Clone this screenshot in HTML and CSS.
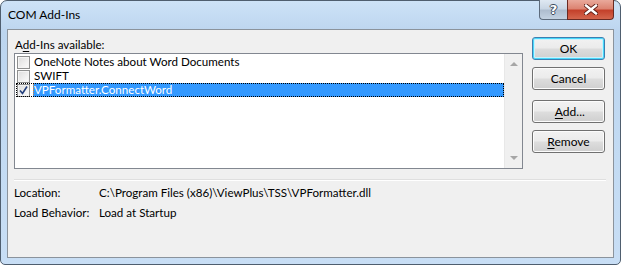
FILE: index.html
```html
<!DOCTYPE html>
<html lang="en">
<head>
  <meta charset="UTF-8" />
  <title>COM Add-Ins</title>
  <link rel="stylesheet" href="styles.css">
</head>
<body>
  <div class="window">
    <div class="titlebar">
      <span class="title">COM Add-Ins</span>
      <div class="caption-buttons">
        <div class="cap help">?</div>
        <div class="cap close">
          <svg width="14" height="11" viewBox="0 0 14 11">
            <path d="M2 1.5 L12 9.5 M12 1.5 L2 9.5" stroke="#5a1a12" stroke-width="4.2" stroke-linecap="square" fill="none"/>
            <path d="M2 1.5 L12 9.5 M12 1.5 L2 9.5" stroke="#fff" stroke-width="2.4" stroke-linecap="square" fill="none"/>
          </svg>
        </div>
      </div>
    </div>

    <div class="panel">
      <div class="top">
        <div class="left">
          <div class="label">A<u>d</u>d-Ins available:</div>
          <div class="listbox">
            <div class="items">
              <div class="item">
                <span class="check"></span>
                <span class="text">OneNote Notes about Word Documents</span>
              </div>
              <div class="item">
                <span class="check"></span>
                <span class="text">SWIFT</span>
              </div>
              <div class="item focused">
                <span class="check checked">
                  <svg width="11" height="11" viewBox="0 0 11 11">
                    <path d="M2 5.5 L4.5 8.5 L9 1.5" stroke="#233f7c" stroke-width="1.6" fill="none"/>
                  </svg>
                </span>
                <span class="text selected">VPFormatter.ConnectWord</span>
              </div>
            </div>
            <div class="scrollbar">
              <span class="arrow up"></span>
              <span class="arrow down"></span>
            </div>
          </div>
        </div>

        <div class="buttons">
          <button class="btn default">OK</button>
          <button class="btn">Cancel</button>
          <button class="btn gap">&nbsp;<u>A</u>dd...</button>
          <button class="btn"><u>R</u>emove</button>
        </div>
      </div>

      <div class="separator"></div>

      <div class="info">
        <span>Location:</span>
        <span>C:\Program Files (x86)\ViewPlus\TSS\VPFormatter.dll</span>
        <span>Load Behavior:</span>
        <span>Load at Startup</span>
      </div>
    </div>
  </div>
</body>
</html>
```

FILE: styles.css
```css
body {
  margin: 0;
  font-family: 'Lato', 'Noto Sans', sans-serif;
  font-size: 11.6px;
  color: #000;
  background: #fff;
}
u {
  text-decoration-thickness: 1px;
  text-underline-offset: 2px;
}
.window {
  width: 621px;
  height: 265px;
  box-sizing: border-box;
  border: 1px solid #4f5e6f;
  border-radius: 7px 7px 5px 5px;
  background: linear-gradient(180deg, #cde2f7 0%, #bcd5ef 12%, #c3dbf3 60%, #c8def5 100%);
  display: flex;
  flex-direction: column;
}
.titlebar {
  height: 28px;
  display: flex;
  align-items: flex-start;
  padding-left: 7px;
  padding-right: 6px;
}
.title {
  margin-top: 6px;
  font-size: 12px;
  color: #000;
}
.caption-buttons {
  margin-left: auto;
  display: flex;
  margin-top: -1px;
}
.cap {
  height: 20px;
  box-sizing: border-box;
  border: 1px solid #5d6b7c;
  border-top: none;
  display: flex;
  align-items: center;
  justify-content: center;
}
.help {
  width: 28px;
  border-radius: 0 0 0 4px;
  border-right: none;
  background: linear-gradient(180deg, #dfe8f2 0%, #c9d6e4 45%, #aebdcf 55%, #c3d2e2 100%);
  color: #fff;
  font-family: 'DejaVu Sans', sans-serif;
  font-weight: bold;
  font-size: 13px;
  text-shadow: 1px 0 #3c4a5c, -1px 0 #3c4a5c, 0 1px #3c4a5c, 0 -1px #3c4a5c;
}
.close {
  width: 47px;
  border-radius: 0 0 4px 0;
  border-color: #6a2a22;
  background: linear-gradient(180deg, #e9a99b 0%, #dc8472 45%, #c4412b 55%, #d4664d 100%);
}
.panel {
  flex: 1;
  margin: 0 6px 6px 6px;
  border: 1px solid #8b939c;
  background: #f0f0f0;
  padding: 7px 8px 0 6px;
}
.top {
  display: flex;
  gap: 9px;
}
.left {
  flex: 1;
}
.label {
  height: 15px;
  line-height: 15px;
  padding-left: 1px;
  margin-bottom: 1px;
}
.listbox {
  height: 116px;
  box-sizing: border-box;
  border: 1px solid #828790;
  background: #fff;
  display: flex;
}
.items {
  flex: 1;
  padding: 1px 0 0 1px;
}
.item {
  height: 14px;
  display: flex;
  align-items: center;
}
.item.focused {
  outline: 1px dotted #000;
  outline-offset: -1px;
}
.check {
  width: 13px;
  height: 13px;
  box-sizing: border-box;
  border: 1px solid #8e8f8f;
  background: linear-gradient(135deg, #dcdcdc 0%, #f3f3f3 70%, #fbfbfb 100%);
  box-shadow: inset 0 0 0 1px #f4f4f4;
  margin-left: 1px;
  margin-right: 3px;
  display: flex;
  align-items: center;
  justify-content: center;
}
.check svg {
  display: block;
}
.text {
  line-height: 14px;
  padding-left: 1px;
}
.text.selected {
  flex: 1;
  height: 14px;
  background: #3399ff;
  color: #fff;
  outline: 1px dotted #d9802c;
  outline-offset: -1px;
}
.scrollbar {
  width: 17px;
  background: #f0f0f0;
  border-left: 1px solid #e8e8e8;
  display: flex;
  flex-direction: column;
  justify-content: space-between;
  align-items: center;
  padding: 8px 0 8px;
}
.arrow {
  width: 0;
  height: 0;
  border-left: 4px solid transparent;
  border-right: 4px solid transparent;
}
.arrow.up {
  border-bottom: 4px solid #a6a6a6;
}
.arrow.down {
  border-top: 4px solid #a6a6a6;
}
.buttons {
  width: 73px;
  display: flex;
  flex-direction: column;
  gap: 7px;
}
.btn {
  height: 23px;
  width: 73px;
  font-family: inherit;
  font-size: 12px;
  color: #000;
  border: 1px solid #707070;
  border-radius: 3px;
  background: linear-gradient(180deg, #f2f2f2 0%, #ebebeb 48%, #dddddd 52%, #cfcfcf 100%);
  box-shadow: inset 0 0 0 1px #fcfcfc;
  padding: 0;
}
.btn.default {
  border-color: #3c7fb1;
  box-shadow: inset 0 0 0 1px #48d8fb, inset 0 0 0 2px #c9f2fd;
}
.btn.gap {
  margin-top: 3px;
}
.separator {
  margin: 10px 0 1px 0;
  height: 1px;
  background: #dfdfdf;
  border-bottom: 1px solid #fff;
  margin-right: -1px;
}
.info {
  display: grid;
  grid-template-columns: 85px auto;
  grid-auto-rows: 20px;
  align-items: center;
}
```
